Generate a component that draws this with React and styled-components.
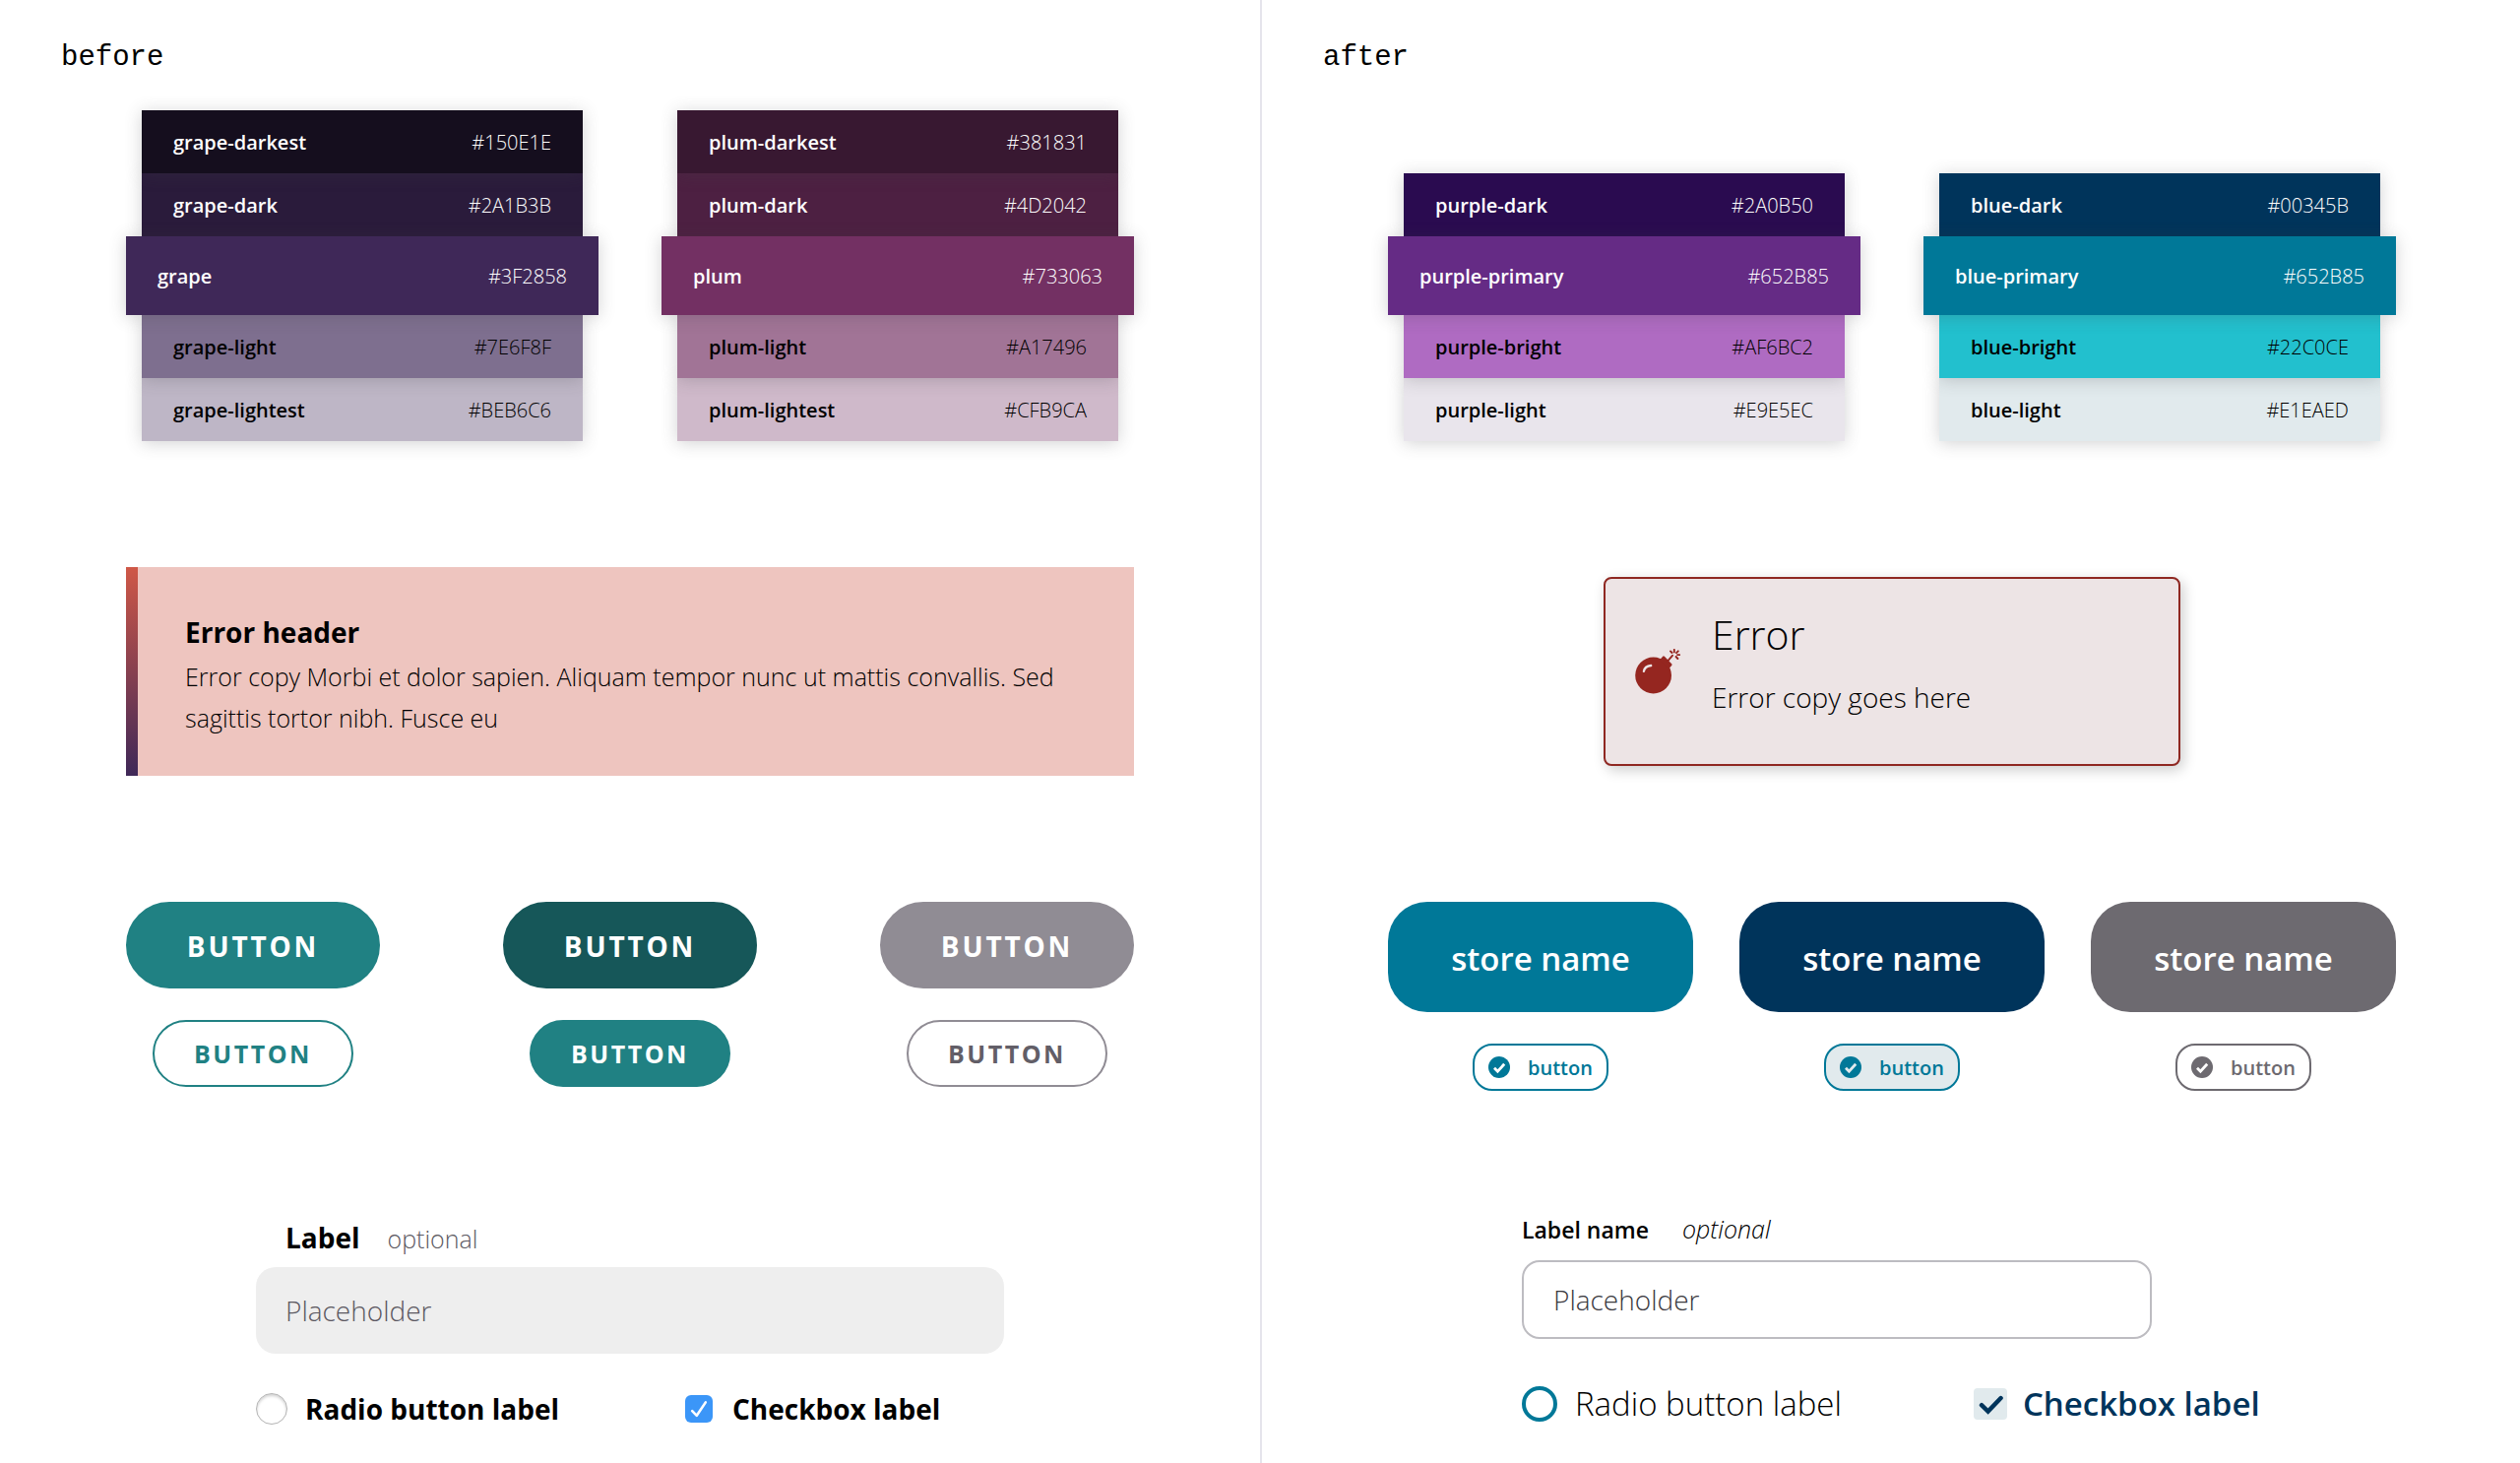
import React from 'react';
import styled, { createGlobalStyle } from 'styled-components';

const GlobalStyle = createGlobalStyle`
  *, *::before, *::after { box-sizing: border-box; }
  body {
    margin: 0;
    background: #fff;
    color: #000;
    font-family: 'Open Sans', 'Noto Sans', sans-serif;
    font-weight: 300;
  }
  button, input { font: inherit; color: inherit; margin: 0; }
`;

const Page = styled.div`
  display: grid;
  grid-template-columns: 1fr 1fr;
  min-height: 100vh;
`;

const Pane = styled.section`
  display: flex;
  flex-direction: column;
  gap: 128px;
  padding: 40px 128px;
  & + & {
    border-left: 2px solid #e5e4ec;
    padding-right: 126px;
  }
`;

const Intro = styled.div`
  display: flex;
  flex-direction: column;
  gap: 34px;
`;

const Title = styled.h1`
  margin: 0 0 0 -66px;
  font: 400 29px/38px 'Liberation Mono', monospace;
`;

const Palettes = styled.div`
  display: grid;
  grid-template-columns: 1fr 1fr;
  gap: 64px;
  align-items: end;
  min-height: 336px;
`;

const Palette = styled.ul`
  list-style: none;
  margin: 0;
  padding: 0;
  isolation: isolate;
`;

const Swatch = styled.li`
  position: relative;
  z-index: ${(p) => p.$level};
  display: flex;
  align-items: center;
  justify-content: space-between;
  height: ${(p) => (p.$main ? 80 : 64)}px;
  margin: 0 ${(p) => (p.$main ? 0 : 16)}px;
  padding: 0 32px;
  background: ${(p) => p.$color};
  color: ${(p) => (p.$light ? '#000' : '#fff')};
  box-shadow: 0 2px 16px rgba(68, 68, 72, 0.24);
  font-size: 20px;
`;

const SwatchName = styled.strong`
  font-weight: 600;
`;

const AlertSlot = styled.div`
  display: flex;
  align-items: center;
  justify-content: center;
  min-height: 212px;
`;

const Banner = styled.div`
  display: flex;
  width: 100%;
  background: #eec5bf;
  &::before {
    content: '';
    flex: none;
    width: 12px;
    background: linear-gradient(#cf5847, #3f2858);
  }
`;

const BannerBody = styled.div`
  padding: 42px 48px 38px;
`;

const BannerTitle = styled.h2`
  margin: 0;
  font-size: 28px;
  line-height: 48px;
  font-weight: 700;
`;

const BannerCopy = styled.p`
  margin: 0;
  font-size: 25px;
  line-height: 42px;
`;

const ErrorCard = styled.div`
  display: flex;
  align-items: center;
  gap: 32px;
  width: 586px;
  padding: 0 30px;
  border: 2px solid #8f2822;
  border-radius: 8px;
  background: #ede4e5;
  box-shadow: 3px 4px 14px rgba(0, 0, 0, 0.2);
`;

const ErrorText = styled.div`
  padding: 28px 0 40px;
`;

const ErrorTitle = styled.h2`
  margin: 0 0 8px;
  font-size: 41px;
  line-height: 56px;
  font-weight: 300;
`;

const ErrorCopy = styled.p`
  margin: 0;
  font-size: 28px;
  line-height: 56px;
`;

const Buttons = styled.div`
  display: flex;
  justify-content: space-between;
`;

const ButtonStack = styled.div`
  display: flex;
  flex-direction: column;
  align-items: center;
  gap: 32px;
`;

const OldButton = styled.button`
  height: ${(p) => (p.$small ? 68 : 88)}px;
  width: ${(p) => (p.$small ? 204 : 258)}px;
  padding: ${(p) => (p.$small ? 0 : 2)}px 0 0;
  border: 2px solid ${(p) => p.$border};
  border-radius: 44px;
  background: ${(p) => p.$fill};
  color: ${(p) => p.$ink};
  font-size: ${(p) => (p.$small ? 25 : 28)}px;
  font-weight: 700;
  letter-spacing: 0.1em;
  text-transform: uppercase;
`;

const StoreButton = styled.button`
  width: 310px;
  height: 112px;
  padding: 2px 0 0;
  border: 0;
  border-radius: 40px;
  background: ${(p) => p.$fill};
  color: #fff;
  font-size: 33px;
  font-weight: 600;
`;

const PillButton = styled.button`
  display: flex;
  align-items: center;
  gap: 18px;
  width: 138px;
  height: 48px;
  padding: 0 14px;
  border: 2px solid ${(p) => p.$ink};
  border-radius: 20px;
  background: ${(p) => p.$fill};
  color: ${(p) => p.$ink};
  font-size: 20px;
  font-weight: 600;
`;

const Form = styled.form`
  width: ${(p) => p.$width}px;
  max-width: 100%;
  margin: 0 auto;
`;

const LabelRow = styled.div`
  display: flex;
  align-items: baseline;
  ${(p) =>
    p.$old
      ? 'gap: 28px; padding-left: 30px; line-height: 50px; margin-bottom: 4px;'
      : 'gap: 34px; line-height: 24px; margin-bottom: 19px;'}
`;

const FieldLabel = styled.label`
  font-size: ${(p) => (p.$old ? 28 : 23)}px;
  font-weight: ${(p) => (p.$old ? 700 : 600)};
`;

const Optional = styled.span`
  font-size: 25px;
  font-style: ${(p) => (p.$old ? 'normal' : 'italic')};
  color: ${(p) => (p.$old ? '#5b5861' : 'inherit')};
`;

const TextField = styled.input`
  display: block;
  width: ${(p) => (p.$old ? '100%' : '640px')};
  height: ${(p) => (p.$old ? 88 : 80)}px;
  padding: 0 30px;
  border: ${(p) => (p.$old ? '0' : '2px solid #bdbcc1')};
  border-radius: ${(p) => (p.$old ? 20 : 18)}px;
  background: ${(p) => (p.$old ? '#eeeeee' : '#fff')};
  font-size: 28px;
  &::placeholder {
    color: ${(p) => (p.$old ? '#5b5861' : '#3a393e')};
    opacity: 1;
  }
`;

const Options = styled.div`
  display: flex;
  align-items: center;
  gap: ${(p) => (p.$old ? 128 : 134)}px;
  height: ${(p) => (p.$old ? 32 : 44)}px;
  margin-top: ${(p) => (p.$old ? 40 : 44)}px;
`;

const Option = styled.label`
  display: flex;
  align-items: center;
  gap: ${(p) => p.$gap}px;
  font-size: ${(p) => p.$size}px;
  line-height: 44px;
  font-weight: ${(p) => p.$weight};
  color: ${(p) => p.$ink || 'inherit'};
  white-space: nowrap;
`;

const OldRadio = styled.input`
  appearance: none;
  width: 32px;
  height: 32px;
  border: 1px solid #b4b4b4;
  border-radius: 50%;
  box-shadow: inset 0 2px 3px rgba(0, 0, 0, 0.18);
`;

const NewRadio = styled.input`
  appearance: none;
  width: 36px;
  height: 36px;
  border: 4px solid #007898;
  border-radius: 50%;
`;

const CheckStack = styled.span`
  display: grid;
  & > * { grid-area: 1 / 1; }
  & > svg { pointer-events: none; }
`;

const CheckInput = styled.input`
  appearance: none;
  width: ${(p) => p.$width}px;
  height: ${(p) => p.$height}px;
  border-radius: ${(p) => p.$radius}px;
  background: ${(p) => p.$fill};
`;

function BombIcon() {
  return (
    <svg width="46" height="46" viewBox="0 0 46 46" fill="none" aria-hidden="true">
      <circle cx="18.6" cy="27" r="18.4" fill="#952620" />
      <path d="M25 11.2 28.2 7.7Q29 7 29.9 7.8L37.2 15.2Q38 16 37.2 16.9L34 20.4Z" fill="#952620" />
      <path
        d="M33 12.6 38 6.8M39.8 .9V3.4M36 2.4 37.5 4M43.8 2.3 42 4.1M43 6.1H45.3M41.6 8 43.4 10"
        stroke="#952620"
        strokeWidth="1.9"
        strokeLinecap="round"
      />
      <path d="M8.9 22.9Q9.8 17.6 16.2 17" stroke="#ede4e5" strokeWidth="2.3" strokeLinecap="round" />
    </svg>
  );
}

function CheckCircle({ tick }) {
  return (
    <svg width="22" height="22" viewBox="0 0 22 22" fill="none" aria-hidden="true">
      <circle cx="11" cy="11" r="11" fill="currentColor" />
      <path d="M6 11.8 9.4 15.2 16.2 7.8" stroke={tick} strokeWidth="2.8" />
    </svg>
  );
}

const beforePalettes = [
  [
    { name: 'grape-darkest', hex: '#150E1E', level: 2 },
    { name: 'grape-dark', hex: '#2A1B3B', level: 1 },
    { name: 'grape', hex: '#3F2858', level: 3, main: true },
    { name: 'grape-light', hex: '#7E6F8F', level: 2, light: true },
    { name: 'grape-lightest', hex: '#BEB6C6', level: 1, light: true },
  ],
  [
    { name: 'plum-darkest', hex: '#381831', level: 2 },
    { name: 'plum-dark', hex: '#4D2042', level: 1 },
    { name: 'plum', hex: '#733063', level: 3, main: true },
    { name: 'plum-light', hex: '#A17496', level: 2, light: true },
    { name: 'plum-lightest', hex: '#CFB9CA', level: 1, light: true },
  ],
];

const afterPalettes = [
  [
    { name: 'purple-dark', hex: '#2A0B50', level: 2 },
    { name: 'purple-primary', hex: '#652B85', level: 3, main: true },
    { name: 'purple-bright', hex: '#AF6BC2', level: 2, light: true },
    { name: 'purple-light', hex: '#E9E5EC', level: 1, light: true },
  ],
  [
    { name: 'blue-dark', hex: '#00345B', level: 2 },
    { name: 'blue-primary', hex: '#652B85', color: '#007898', level: 3, main: true },
    { name: 'blue-bright', hex: '#22C0CE', level: 2, light: true },
    { name: 'blue-light', hex: '#E1EAED', level: 1, light: true },
  ],
];

const oldButtons = [
  { fill: '#208183', small: { fill: '#fff', ink: '#208183', border: '#208183' } },
  { fill: '#165759', small: { fill: '#208183', ink: '#fff', border: '#208183' } },
  { fill: '#908c94', small: { fill: '#fff', ink: '#625e67', border: '#908c94' } },
];

const newButtons = [
  { fill: '#007898', small: { fill: '#fff', ink: '#007898' } },
  { fill: '#00345b', small: { fill: '#e1eaed', ink: '#007898' } },
  { fill: '#6d6a70', small: { fill: '#fff', ink: '#6d6a70' } },
];

function PaletteGroup({ palettes }) {
  return (
    <Palettes>
      {palettes.map((swatches) => (
        <Palette key={swatches[0].name}>
          {swatches.map((s) => (
            <Swatch key={s.name} $color={s.color || s.hex} $level={s.level} $main={s.main} $light={s.light}>
              <SwatchName>{s.name}</SwatchName>
              <span>{s.hex}</span>
            </Swatch>
          ))}
        </Palette>
      ))}
    </Palettes>
  );
}

export default function App() {
  return (
    <>
      <GlobalStyle />
      <Page>
        <Pane>
          <Intro>
            <Title>before</Title>
            <PaletteGroup palettes={beforePalettes} />
          </Intro>
          <AlertSlot>
            <Banner role="alert">
              <BannerBody>
                <BannerTitle>Error header</BannerTitle>
                <BannerCopy>
                  Error copy Morbi et dolor sapien. Aliquam tempor nunc ut mattis convallis. Sed sagittis
                  tortor nibh. Fusce eu
                </BannerCopy>
              </BannerBody>
            </Banner>
          </AlertSlot>
          <Buttons>
            {oldButtons.map((b) => (
              <ButtonStack key={b.fill}>
                <OldButton type="button" $fill={b.fill} $border={b.fill} $ink="#fff">
                  Button
                </OldButton>
                <OldButton type="button" $small $fill={b.small.fill} $border={b.small.border} $ink={b.small.ink}>
                  Button
                </OldButton>
              </ButtonStack>
            ))}
          </Buttons>
          <Form $width={760}>
            <LabelRow $old>
              <FieldLabel $old htmlFor="before-field">Label</FieldLabel>
              <Optional $old>optional</Optional>
            </LabelRow>
            <TextField $old id="before-field" type="text" placeholder="Placeholder" />
            <Options $old>
              <Option $gap={18} $size={28} $weight={700}>
                <OldRadio type="radio" name="before-radio" />
                Radio button label
              </Option>
              <Option $gap={20} $size={28} $weight={700}>
                <CheckStack>
                  <CheckInput type="checkbox" defaultChecked $width={28} $height={28} $radius={6} $fill="#3b96f8" />
                  <svg width="28" height="28" viewBox="0 0 28 28" fill="none" aria-hidden="true">
                    <path
                      d="M7.2 16.2 11.8 20.8 20.8 7.4"
                      stroke="#fff"
                      strokeWidth="2.6"
                      strokeLinecap="round"
                      strokeLinejoin="round"
                    />
                  </svg>
                </CheckStack>
                Checkbox label
              </Option>
            </Options>
          </Form>
        </Pane>

        <Pane>
          <Intro>
            <Title>after</Title>
            <PaletteGroup palettes={afterPalettes} />
          </Intro>
          <AlertSlot>
            <ErrorCard role="alert">
              <BombIcon />
              <ErrorText>
                <ErrorTitle>Error</ErrorTitle>
                <ErrorCopy>Error copy goes here</ErrorCopy>
              </ErrorText>
            </ErrorCard>
          </AlertSlot>
          <Buttons>
            {newButtons.map((b) => (
              <ButtonStack key={b.fill}>
                <StoreButton type="button" $fill={b.fill}>store name</StoreButton>
                <PillButton type="button" $fill={b.small.fill} $ink={b.small.ink}>
                  <CheckCircle tick={b.small.fill} />
                  button
                </PillButton>
              </ButtonStack>
            ))}
          </Buttons>
          <Form $width={752}>
            <LabelRow>
              <FieldLabel htmlFor="after-field">Label name</FieldLabel>
              <Optional>optional</Optional>
            </LabelRow>
            <TextField id="after-field" type="text" placeholder="Placeholder" />
            <Options>
              <Option $gap={18} $size={33} $weight={300}>
                <NewRadio type="radio" name="after-radio" />
                Radio button label
              </Option>
              <Option $gap={16} $size={33} $weight={600} $ink="#00345b">
                <CheckStack>
                  <CheckInput type="checkbox" defaultChecked $width={34} $height={32} $radius={4} $fill="#e1eaed" />
                  <svg width="34" height="32" viewBox="0 0 34 32" fill="none" aria-hidden="true">
                    <path
                      d="M8 17.2 14.6 23.6 27.6 10"
                      stroke="#00345b"
                      strokeWidth="4.4"
                      strokeLinecap="round"
                    />
                  </svg>
                </CheckStack>
                Checkbox label
              </Option>
            </Options>
          </Form>
        </Pane>
      </Page>
    </>
  );
}
